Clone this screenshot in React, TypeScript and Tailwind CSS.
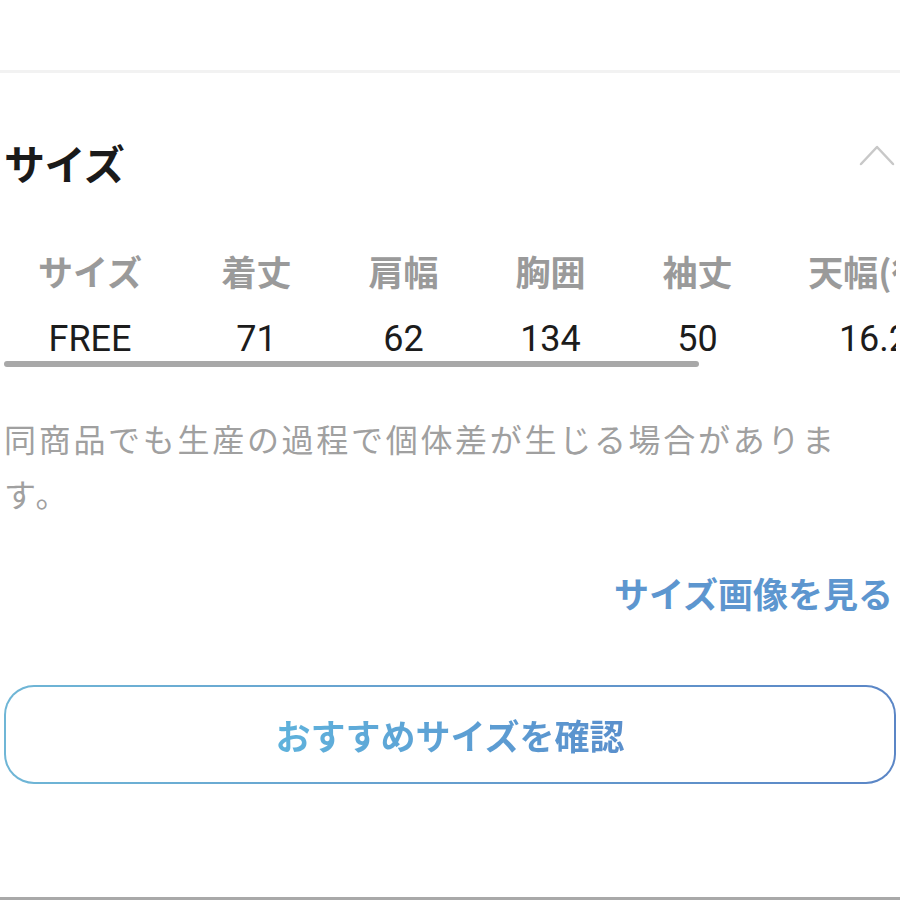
const jp = { fontFamily: '"Noto Sans CJK JP", "Noto Sans", sans-serif' };

const columns = [
  { label: 'サイズ', value: 'FREE', width: 'w-[172px] mr-[7px]' },
  { label: '着丈', value: '71', width: 'w-[147px]' },
  { label: '肩幅', value: '62', width: 'w-[147px]' },
  { label: '胸囲', value: '134', width: 'w-[147px]' },
  { label: '袖丈', value: '50', width: 'w-[147px]' },
  { label: '天幅(径)', value: '16.2', width: 'w-[206px]' },
];

export default function App() {
  return (
    <div className="h-[900px] bg-white flex flex-col overflow-hidden" style={jp}>
      <div className="h-[70px]" />
      <div className="h-[3px] bg-[#f2f2f2]" />

      <div className="px-[4px]">
        {/* section header */}
        <div className="mt-[59px] flex items-center justify-between">
          <h2 className="text-[41px] leading-[60px] font-bold text-[#1a1a1a] tracking-[-0.5px]">サイズ</h2>
          <svg width="36" height="24" viewBox="0 0 36 24" className="mr-[1px] -mt-[14px]">
            <polyline points="2,21 18,4 34,21" fill="none" stroke="#c8c8c8" strokeWidth="2.5" strokeLinecap="round" strokeLinejoin="round" />
          </svg>
        </div>

        {/* scrollable size table */}
        <div className="mt-[54px] overflow-hidden">
          <div className="flex w-max">
            {columns.map((c) => (
              <div key={c.label} className={`${c.width} shrink-0 flex flex-col items-center`}>
                <div className="h-[50px] leading-[50px] text-[35px] font-bold text-[#9a9a9a] whitespace-nowrap">
                  {c.label}
                </div>
                <div
                  className="mt-[21px] h-[44px] leading-[44px] text-[36px] text-[#1c1c1c] whitespace-nowrap"
                  style={{ fontFamily: 'Roboto, "Noto Sans", sans-serif' }}
                >
                  {c.value}
                </div>
              </div>
            ))}
          </div>
          <div className="h-[6px] w-[695px] rounded-full bg-[#a8a8a8]" />
        </div>

        {/* note */}
        <p className="mt-[44px] max-w-[852px] text-[32px] leading-[55px] tracking-[2.7px] text-[#a0a0a0]">
          同商品でも生産の過程で個体差が生じる場合があります。
        </p>

        {/* link */}
        <div className="mt-[47px] flex justify-end">
          <a className="text-[35px] leading-[50px] font-bold text-[#5d96cf] pr-[3px]">サイズ画像を見る</a>
        </div>

        {/* recommend button */}
        <div className="mt-[67px] rounded-[30px] p-[2px] bg-gradient-to-r from-[#6fb6d6] to-[#5b86c6]">
          <div className="h-[95px] rounded-[28px] bg-white flex items-center justify-center">
            <span className="text-[35px] font-bold leading-[50px] bg-gradient-to-r from-[#5fb2dc] to-[#5a8fcc] bg-clip-text text-transparent">
              おすすめサイズを確認
            </span>
          </div>
        </div>
      </div>

      <div className="mt-auto h-[3px] bg-[#a9a9a9]" />
    </div>
  );
}
